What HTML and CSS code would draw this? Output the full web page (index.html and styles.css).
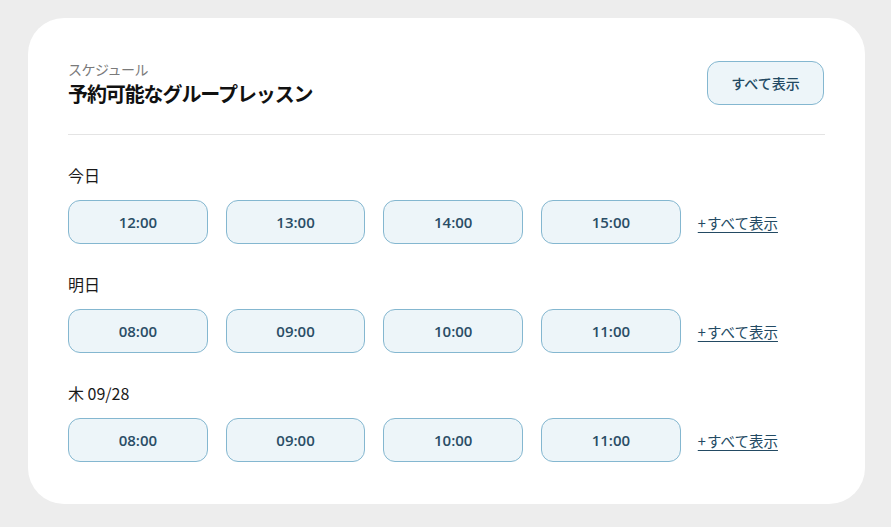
FILE: index.html
```html
<!DOCTYPE html>
<html lang="ja">
<head>
<meta charset="utf-8">
<link rel="stylesheet" href="styles.css">
</head>
<body>
<div class="page">
  <section class="card">
    <header class="head">
      <div class="titles">
        <div class="sub">スケジュール</div>
        <h1 class="title">予約可能なグループレッスン</h1>
      </div>
      <button class="all-btn">すべて表示</button>
    </header>
    <div class="divider"></div>
    <div class="day">
      <div class="day-label">今日</div>
      <div class="slots">
        <button class="slot">12:00</button>
        <button class="slot">13:00</button>
        <button class="slot">14:00</button>
        <button class="slot">15:00</button>
        <a class="more" href="#">+ すべて表示</a>
      </div>
    </div>
    <div class="day">
      <div class="day-label">明日</div>
      <div class="slots">
        <button class="slot">08:00</button>
        <button class="slot">09:00</button>
        <button class="slot">10:00</button>
        <button class="slot">11:00</button>
        <a class="more" href="#">+ すべて表示</a>
      </div>
    </div>
    <div class="day">
      <div class="day-label">木 09/28</div>
      <div class="slots">
        <button class="slot">08:00</button>
        <button class="slot">09:00</button>
        <button class="slot">10:00</button>
        <button class="slot">11:00</button>
        <a class="more" href="#">+ すべて表示</a>
      </div>
    </div>
  </section>
</div>
</body>
</html>
```

FILE: styles.css
```css
html, body {
  margin: 0;
  padding: 0;
  background: #ededed;
}
body {
  font-family: "Open Sans", "Noto Sans CJK JP", sans-serif;
  color: #1a1a1a;
}
.page {
  padding: 18px 26px 23px 28px;
}
.card {
  background: #ffffff;
  border-radius: 36px;
  padding: 40px 40px 42px 40px;
  width: 757px;
}
.head {
  display: flex;
  align-items: center;
  justify-content: space-between;
}
.titles {
  display: flex;
  flex-direction: column;
}
.sub {
  font-family: "Noto Sans CJK JP", sans-serif;
  font-size: 14px;
  line-height: 22px;
  color: #7a7a7a;
  letter-spacing: -0.5px;
}
.title {
  margin: 0;
  font-family: "Noto Sans CJK JP", sans-serif;
  font-size: 20px;
  line-height: 28px;
  font-weight: 700;
  color: #111;
  letter-spacing: -1.1px;
}
.all-btn {
  width: 117px;
  height: 44px;
  border: 1px solid #84b7d0;
  border-radius: 12px;
  background: #edf5f9;
  color: #234a63;
  font-family: "Noto Sans CJK JP", sans-serif;
  font-size: 14px;
  font-weight: 500;
  margin-right: 1px;
}
.divider {
  height: 1px;
  background: #e4e4e4;
  margin: 26px 0 28px 0;
}
.day {
  margin-bottom: 28px;
}
.day:last-child {
  margin-bottom: 0;
}
.day-label {
  font-family: "Noto Sans CJK JP", sans-serif;
  font-size: 16px;
  line-height: 24px;
  color: #1a1a1a;
  margin-bottom: 13px;
}
.slots {
  display: flex;
  align-items: center;
  gap: 18px;
}
.slot {
  width: 139.7px;
  height: 44px;
  border: 1px solid #84b7d0;
  border-radius: 12px;
  background: #edf5f9;
  color: #2a4d66;
  font-family: "Open Sans", sans-serif;
  font-size: 15px;
  font-weight: 600;
  padding: 0;
}
.more {
  margin-left: -1px;
  font-family: "Noto Sans CJK JP", sans-serif;
  font-size: 14.5px;
  color: #234a63;
  text-decoration: underline;
  text-underline-offset: 3px;
  word-spacing: -2px;
}
```
